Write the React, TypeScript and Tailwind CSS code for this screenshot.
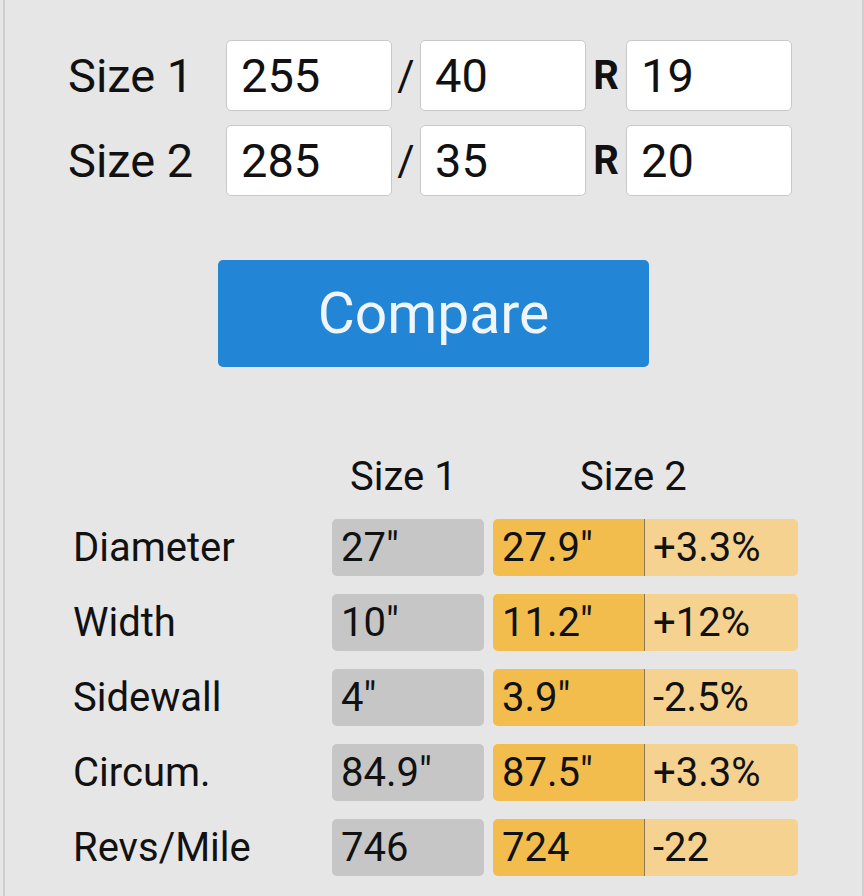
const inputs = [
  { label: "Size 1", width: "255", ratio: "40", rim: "19" },
  { label: "Size 2", width: "285", ratio: "35", rim: "20" },
];

const rows = [
  { name: "Diameter", a: "27\"", b: "27.9\"", diff: "+3.3%" },
  { name: "Width", a: "10\"", b: "11.2\"", diff: "+12%" },
  { name: "Sidewall", a: "4\"", b: "3.9\"", diff: "-2.5%" },
  { name: "Circum.", a: "84.9\"", b: "87.5\"", diff: "+3.3%" },
  { name: "Revs/Mile", a: "746", b: "724", diff: "-22" },
];

function Field({ value }: { value: string }) {
  return (
    <div className="w-[166px] h-[71px] bg-white border-[1.5px] border-[#c9c9c9] rounded-[5px] flex items-center pl-[14px] text-[47px] leading-none text-[#111]">
      {value}
    </div>
  );
}

export default function App() {
  return (
    <div className="w-full h-[896px] bg-[#e6e6e6] pl-[3px] font-['Roboto',sans-serif] text-[#111] overflow-hidden">
      <div className="h-full border-l-[2px] border-r-[2px] border-[#cfcfcf]">
        {/* size inputs */}
        <div className="pt-[40px] pl-[63px] flex flex-col gap-[14px]">
          {inputs.map((r) => (
            <div key={r.label} className="flex items-center">
              <div className="w-[158px] text-[47px] leading-none">{r.label}</div>
              <Field value={r.width} />
              <div className="w-[28px] text-center text-[42px] leading-none">/</div>
              <Field value={r.ratio} />
              <div className="w-[40px] text-center text-[40px] font-bold leading-none">R</div>
              <Field value={r.rim} />
            </div>
          ))}
        </div>

        {/* compare button */}
        <div className="mt-[64px] pl-[213px]">
          <button className="w-[431px] h-[107px] bg-[#2285d5] rounded-[5px] text-[#eef5fc] text-[57px] leading-none">
            Compare
          </button>
        </div>

        {/* results table */}
        <div className="mt-[86px] pl-[66px] text-[40px]">
          <div className="flex h-[47px] items-center leading-none">
            <div className="w-[261px]" />
            <div className="w-[163px] pl-[18px]">Size 1</div>
            <div className="pl-[85px]">Size 2</div>
          </div>
          <div className="mt-[19px] flex flex-col gap-[18px]">
            {rows.map((r) => (
              <div key={r.name} className="flex items-center h-[57px] leading-none">
                <div className="w-[261px] pl-[2px]">{r.name}</div>
                <div className="w-[152px] h-full bg-[#c6c6c6] rounded-[5px] flex items-center pl-[9px]">{r.a}</div>
                <div className="ml-[9px] w-[305px] h-full flex rounded-[5px] overflow-hidden">
                  <div className="w-[152px] h-full bg-[#f2bd4c] flex items-center pl-[9px] border-r-[1.5px] border-[#8d7a55]">{r.b}</div>
                  <div className="flex-1 h-full bg-[#f5d28f] flex items-center pl-[8px]">{r.diff}</div>
                </div>
              </div>
            ))}
          </div>
        </div>
      </div>
    </div>
  );
}
